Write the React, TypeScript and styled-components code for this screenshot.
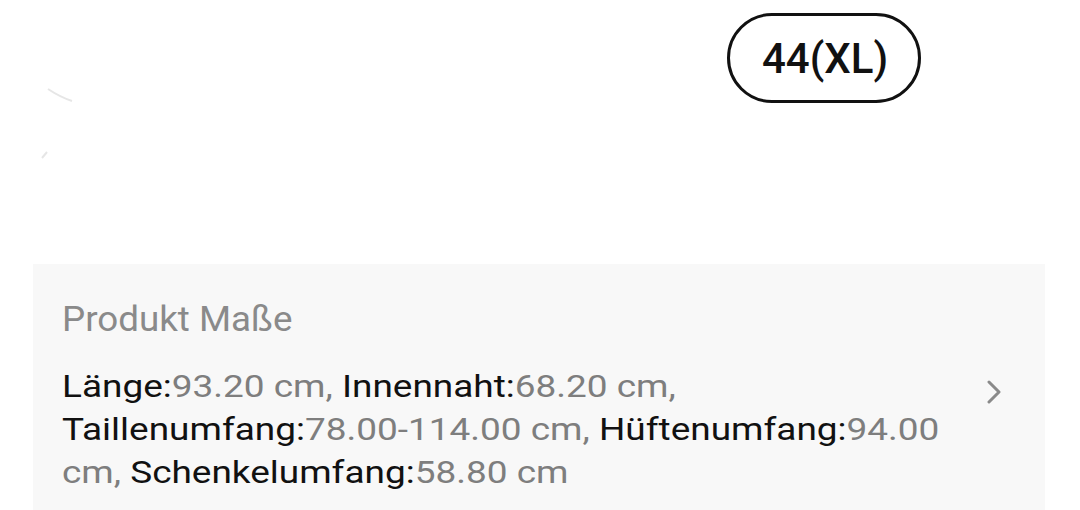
import React from "react";
import styled, { createGlobalStyle } from "styled-components";

const Global = createGlobalStyle`
  html, body { margin: 0; padding: 0; background: #ffffff; }
  body { font-family: Roboto, "Noto Sans", Arial, sans-serif; width: 1080px; height: 510px; overflow: hidden; }
`;

const Page = styled.div`
  width: 1080px;
  height: 510px;
  display: flex;
  flex-direction: column;
  position: relative;
`;

const Top = styled.div`
  height: 264px;
  display: flex;
  justify-content: flex-start;
  padding-left: 727px;
  padding-top: 13px;
  box-sizing: border-box;
`;

const Pill = styled.div`
  width: 194px;
  height: 90px;
  box-sizing: border-box;
  border: 3px solid #111;
  border-radius: 45px;
  display: flex;
  align-items: center;
  justify-content: center;
  font-size: 42px;
  font-weight: 500;
  color: #111;
  padding-left: 2px;
`;

const Marks = styled.svg`
  position: absolute;
  left: 0;
  top: 0;
`;

const Panel = styled.div`
  margin: 0 35px 0 33px;
  background: #f8f8f8;
  flex: 1;
  padding: 36px 43px 0 29px;
  box-sizing: border-box;
`;

const Title = styled.div`
  font-size: 35px;
  color: #8a8a8a;
  line-height: 40px;
  margin-bottom: 25px;
  transform: scaleX(1.05);
  transform-origin: left center;
`;

const Row = styled.div`
  display: flex;
  align-items: flex-start;
  justify-content: space-between;
`;

const TextBox = styled.div`
  width: 900px;
`;

const Text = styled.div`
  width: 796px;
  font-size: 32px;
  line-height: 43px;
  color: #111;
  transform: scaleX(1.155);
  transform-origin: left top;
`;

const Val = styled.span`
  color: #7e7e7e;
`;

const Chevron = styled.svg`
  margin-top: 15px;
  flex: none;
`;

const items: [string, string][] = [
  ["Länge:", "93.20 cm"],
  ["Innennaht:", "68.20 cm"],
  ["Taillenumfang:", "78.00-114.00 cm"],
  ["Hüftenumfang:", "94.00 cm"],
  ["Schenkelumfang:", "58.80 cm"],
];

export default function App() {
  return (
    <Page>
      <Global />
      <Marks width="120" height="200" viewBox="0 0 120 200">
        <path d="M48 89 Q60 97 72 101" stroke="#e6e6e6" strokeWidth="2" fill="none" />
        <path d="M42 158 L47 152" stroke="#e6e6e6" strokeWidth="2" fill="none" />
      </Marks>
      <Top>
        <Pill>44(XL)</Pill>
      </Top>
      <Panel>
        <Title>Produkt Maße</Title>
        <Row>
          <TextBox>
            <Text>
              {items.map(([k, v], i) => (
                <React.Fragment key={k}>
                  {k}
                  <Val>
                    {v}
                    {i < items.length - 1 ? ", " : ""}
                  </Val>
                </React.Fragment>
              ))}
            </Text>
          </TextBox>
          <Chevron width="16" height="24" viewBox="0 0 16 24">
            <path d="M3 2 L13 12 L3 22" stroke="#8a8a8a" strokeWidth="3" fill="none" strokeLinecap="round" strokeLinejoin="round" />
          </Chevron>
        </Row>
      </Panel>
    </Page>
  );
}
